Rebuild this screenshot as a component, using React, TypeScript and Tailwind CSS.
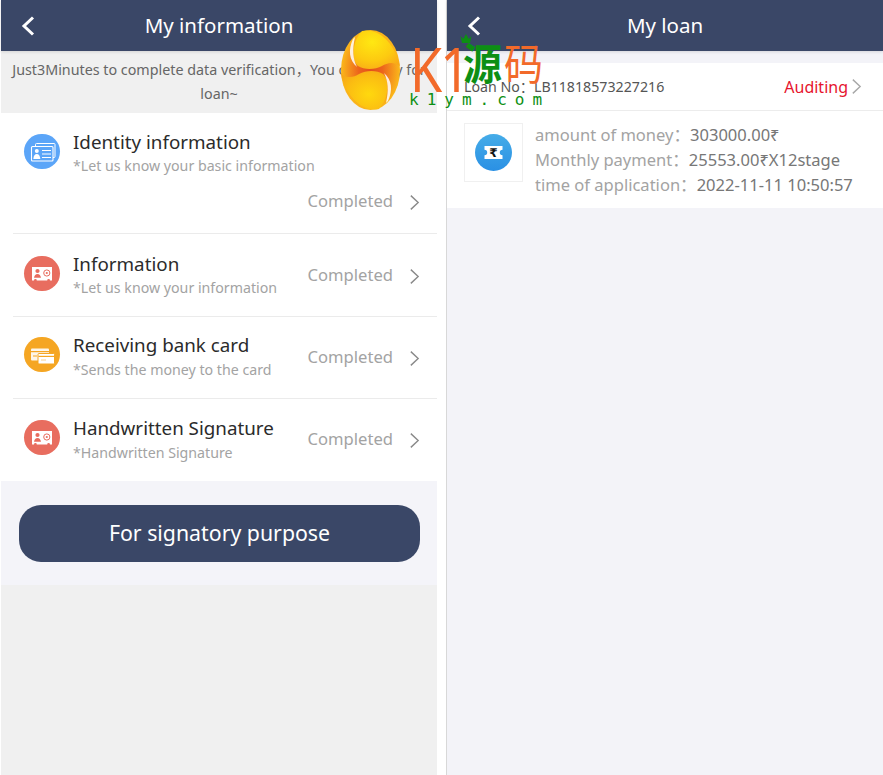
import React from "react";

const font = { fontFamily: '"Noto Sans", "Noto Sans CJK SC", sans-serif' };

function Chevron({ className }: { className: string }) {
  return (
    <svg viewBox="0 0 12 18" className={className} fill="none" stroke="currentColor" strokeWidth="1.5">
      <path d="M2 1.5 L10 9 L2 16.5" />
    </svg>
  );
}

function IconCircle({ bg, children }: { bg: string; children: React.ReactNode }) {
  return (
    <div className={`w-9 h-[35px] rounded-full flex items-center justify-center shrink-0 ${bg}`}>
      <svg viewBox="0 0 36 35" className="w-9 h-[35px]">{children}</svg>
    </div>
  );
}

const IdIcon = (
  <>
    <rect x="11.5" y="9.5" width="19.5" height="14" rx="1" fill="none" stroke="#fff" strokeWidth="1" />
    <rect x="7.5" y="12.5" width="21.5" height="14.5" rx="1" fill="#5ba5f8" stroke="#fff" strokeWidth="1.1" />
    <circle cx="12.8" cy="17" r="2" fill="#fff" />
    <path d="M9.3 25 Q9.8 20 12.8 20 Q15.8 20 16.3 25 Z" fill="#fff" />
    <path d="M18 16.5 H27 M18 20 H27 M18 23.5 H27" stroke="#fff" strokeWidth="1.2" />
  </>
);

const PersonIcon = (
  <>
    <path d="M8 11 H28 V24.5 H26 A1.4 1.4 0 0 0 23.2 24.5 H12.8 A1.4 1.4 0 0 0 10 24.5 H8 Z" fill="#fff" />
    <circle cx="13.5" cy="15" r="2.1" fill="#e86d5f" />
    <path d="M10 21.8 Q10.6 18 13.5 18 Q16.4 18 17 21.8 Z" fill="#e86d5f" />
    <circle cx="22.8" cy="17" r="3.1" fill="none" stroke="#e86d5f" strokeWidth="1" />
    <circle cx="22.8" cy="17" r="1.1" fill="#e86d5f" />
  </>
);

const CardIcon = (
  <>
    <rect x="7" y="11.5" width="18" height="12" rx="1" fill="#fff" opacity="0.9" />
    <rect x="7" y="14" width="18" height="1.2" fill="#f5a623" />
    <path d="M9 19 H13" stroke="#f5a623" strokeWidth="1" />
    <rect x="14" y="16.5" width="16.5" height="10.5" rx="1" fill="#fff" stroke="#f5a623" strokeWidth="1" />
    <rect x="14.5" y="18.8" width="15.5" height="1.2" fill="#f5a623" />
    <path d="M17 23 H22" stroke="#f8cf8c" strokeWidth="1" />
  </>
);

function Status() {
  return (
    <>
      <span className="text-[16.6px] leading-[24px]">Completed</span>
      <Chevron className="ml-[16px] mt-[3px] w-[11px] h-[17px] text-[#8a8a8a]" />
    </>
  );
}

function Row({
  icon,
  title,
  sub,
  className,
  iconClass,
  textClass,
  subClass,
  statusClass,
}: {
  icon: React.ReactNode;
  title: string;
  sub: string;
  className: string;
  iconClass: string;
  textClass: string;
  subClass: string;
  statusClass: string;
}) {
  return (
    <div className={`ml-3 pl-[11px] pr-[17px] flex items-start border-b border-[#ebebeb] ${className}`}>
      <div className={iconClass}>{icon}</div>
      <div className={`ml-[13px] flex-1 ${textClass}`}>
        <div className="text-[18.8px] leading-[26px] text-[#2b2b2b]">{title}</div>
        <div className={`text-[14.2px] text-[#a3a3a3] ${subClass}`}>{sub}</div>
      </div>
      <div className={`flex items-center text-[#a3a3a3] ${statusClass}`}>
        <Status />
      </div>
    </div>
  );
}

function Header({ title }: { title: string }) {
  return (
    <div className="h-[51px] pb-[2px] bg-[#3a4767] flex items-center justify-center relative text-white shadow-[0_1px_3px_rgba(0,0,0,0.12)]">
      <svg viewBox="0 0 14 20" className="absolute left-[20px] top-[16px] w-[14px] h-[20px]" fill="none" stroke="currentColor" strokeWidth="3">
        <path d="M12 1.5 L3 10 L12 18.5" />
      </svg>
      <span className="text-[20.5px] leading-[28px]">{title}</span>
    </div>
  );
}

function Watermark() {
  return (
    <div className="absolute left-[338px] top-[26px] w-[210px] h-[88px]" style={font}>
      <svg viewBox="0 0 66 88" className="absolute left-0 top-0 w-[66px] h-[88px]">
        <defs>
          <radialGradient id="upper" cx="0.4" cy="0.3" r="0.8">
            <stop offset="0" stopColor="#ffe812" />
            <stop offset="0.6" stopColor="#fdca10" />
            <stop offset="1" stopColor="#f8a818" />
          </radialGradient>
          <radialGradient id="lower" cx="0.6" cy="0.6" r="0.8">
            <stop offset="0" stopColor="#ffd80e" />
            <stop offset="0.6" stopColor="#fbbc12" />
            <stop offset="1" stopColor="#f5a01a" />
          </radialGradient>
          <radialGradient id="base" cx="0.5" cy="0.5" r="0.5">
            <stop offset="0" stopColor="#e4501c" />
            <stop offset="0.4" stopColor="#ec641c" />
            <stop offset="1" stopColor="#fbb81a" />
          </radialGradient>
        </defs>
        <ellipse cx="32.5" cy="44" rx="29.5" ry="40" fill="url(#base)" />
        <path d="M24 5 C42 1 58 20 62 40 C55 35 49 37 44 40 C37 44 26 44 20 40 C13 34 14 15 24 5 Z" fill="url(#upper)" />
        <path d="M41 83 C23 87 7 68 3 48 C10 53 16 51 21 48 C28 44 39 44 45 48 C52 54 51 73 41 83 Z" fill="url(#lower)" />
        <path d="M15 13 C10 24 11 34 19 41 C15 33 14 24 17 11 Z" fill="#fff" opacity="0.85" />
        <path d="M50 75 C55 64 54 54 46 47 C50 55 51 64 48 77 Z" fill="#fff" opacity="0.85" />
      </svg>
      <div className="absolute left-[72px] top-[6px] text-[52px] leading-[60px] tracking-[-2px] text-[#f26a2a] whitespace-nowrap scale-y-[1.2] origin-top">
        K1
      </div>
      <svg viewBox="0 0 12 12" className="absolute left-[122px] top-[7px] w-[12px] h-[12px]">
        <path d="M0.5 3 L3.2 6 L6 1 L8.8 6 L11.5 3 L10 10 H2 Z" fill="#0d8f14" />
      </svg>
      <div className="absolute left-[125px] top-[6px] text-[39px] leading-[55px] font-bold text-[#0d8f14] whitespace-nowrap scale-y-[1.12] origin-top">
        源
      </div>
      <div className="absolute left-[166px] top-[6px] text-[39px] leading-[55px] text-[#f26a2a] whitespace-nowrap scale-y-[1.12] origin-top">
        码
      </div>
      <div
        className="absolute left-[71px] top-[64px] text-[16px] leading-[20px] text-[#0d8f14] tracking-[8px] whitespace-nowrap"
        style={{ fontFamily: '"DejaVu Sans Mono", monospace' }}
      >
        k1ym.com
      </div>
    </div>
  );
}

export default function App() {
  return (
    <div className="relative w-[883px] h-[775px] bg-white flex overflow-hidden" style={font}>
      <div className="ml-px w-[436px] h-full bg-[#f0f0f0] flex flex-col">
        <Header title="My information" />
        <div className="h-[62px] px-2 pt-[7px] text-center text-[14.3px] leading-[24px] text-[#666]">
          Just3Minutes to complete data verification，You can apply for loan~
        </div>
        <div className="bg-white h-[368px] flex flex-col">
          <div className="ml-3 h-[121px] pl-[11px] pr-[17px] border-b border-[#ebebeb]">
            <div className="flex items-start">
              <div className="mt-[21px]">
                <IconCircle bg="bg-[#5ba5f8]">{IdIcon}</IconCircle>
              </div>
              <div className="ml-[13px] pt-[16px]">
                <div className="text-[18.8px] leading-[26px] text-[#2b2b2b]">Identity information</div>
                <div className="text-[14.2px] leading-[22px] text-[#a3a3a3]">*Let us know your basic information</div>
              </div>
            </div>
            <div className="flex items-center justify-end mt-[12px] text-[#a3a3a3]">
              <Status />
            </div>
          </div>
          <Row
            className="h-[83px]"
            iconClass="mt-[22px]"
            textClass="pt-[17px]"
            subClass="leading-[22px]"
            statusClass="mt-[29px]"
            icon={<IconCircle bg="bg-[#e86d5f]">{PersonIcon}</IconCircle>}
            title="Information"
            sub="*Let us know your information"
          />
          <Row
            className="h-[82px]"
            iconClass="mt-[20px]"
            textClass="pt-[15px]"
            subClass="leading-[24px]"
            statusClass="mt-[28px]"
            icon={<IconCircle bg="bg-[#f5a623]">{CardIcon}</IconCircle>}
            title="Receiving bank card"
            sub="*Sends the money to the card"
          />
          <Row
            className="h-[82px] border-b-0"
            iconClass="mt-[21px]"
            textClass="pt-[16px]"
            subClass="leading-[24px]"
            statusClass="mt-[28px]"
            icon={<IconCircle bg="bg-[#e86d5f]">{PersonIcon}</IconCircle>}
            title="Handwritten Signature"
            sub="*Handwritten Signature"
          />
        </div>
        <div className="h-[104px] bg-[#f4f4f9] px-[18px] pt-[24px]">
          <button className="w-[401px] h-[57px] pb-[2px] rounded-[22px] bg-[#3a4767] text-white text-[21.3px]">
            For signatory purpose
          </button>
        </div>
      </div>
      <div className="w-[9px]" />
      <div className="w-[437px] h-full border-l border-[#d8d8d8] bg-[#f3f3f8] flex flex-col">
        <Header title="My loan" />
        <div className="mt-[12px] h-[48px] bg-white flex items-center justify-between pl-[17px] pr-[21px] border-b border-[#ececec]">
          <span className="text-[14.2px] text-[#555]">Loan No：LB11818573227216</span>
          <span className="flex items-center text-[16px] text-[#e6142d]">
            Auditing
            <Chevron className="ml-[3px] w-[11px] h-[17px] text-[#a8a8a8]" />
          </span>
        </div>
        <div className="h-[97px] bg-white flex items-start pl-[17px] pt-[12px]">
          <div className="w-[59px] h-[59px] border border-[#f0f0f0] flex items-center justify-center">
            <svg viewBox="0 0 37 37" className="w-[37px] h-[37px]">
              <defs>
                <linearGradient id="tk" x1="0" y1="0" x2="0" y2="1">
                  <stop offset="0" stopColor="#45ace8" />
                  <stop offset="1" stopColor="#2a90e4" />
                </linearGradient>
              </defs>
              <circle cx="18.5" cy="18.5" r="18.5" fill="url(#tk)" />
              <path d="M9.5 12 H27.5 V15.8 A2.7 2.7 0 0 0 27.5 21.2 V25 H9.5 V21.2 A2.7 2.7 0 0 0 9.5 15.8 Z" fill="#fff" />
              <text x="18.5" y="23" textAnchor="middle" fontSize="12" fontWeight="700" fill="#111" fontFamily="DejaVu Sans">₹</text>
            </svg>
          </div>
          <div className="ml-[12px] text-[16.55px] leading-[25px] text-[#a3a3a3] -mt-[1px] whitespace-nowrap">
            <div>amount of money：<span className="text-[#777]">303000.00₹</span></div>
            <div>Monthly payment：<span className="text-[#777]">25553.00₹X12stage</span></div>
            <div>time of application：<span className="text-[#777]">2022-11-11 10:50:57</span></div>
          </div>
        </div>
      </div>
      <Watermark />
    </div>
  );
}
